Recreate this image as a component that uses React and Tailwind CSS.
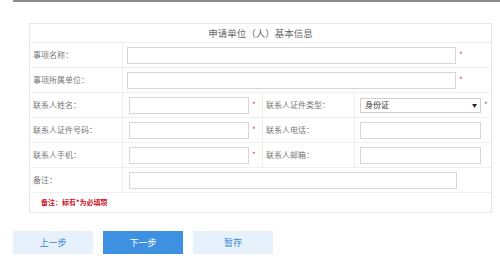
import React from "react";

const font = { fontFamily: '"Noto Sans CJK SC", "Noto Sans", sans-serif' };

function Star() {
  return <span className="ml-[3px] text-[8px] leading-none text-[#e0424b]">*</span>;
}

function Label({ children, className = "" }) {
  return (
    <div className={"flex items-center border-b border-[#efefef] pl-[3px] text-[8px] text-[#777] " + className}>
      {children}
    </div>
  );
}

function Field({ children, className = "" }) {
  return (
    <div className={"flex items-center border-b border-[#efefef] " + className}>{children}</div>
  );
}

function Input({ className = "" }) {
  return <div className={"h-[17px] border border-[#d6d6d6] bg-white " + className} />;
}

export default function App() {
  return (
    <div className="relative h-[269px] w-[500px] overflow-hidden bg-white" style={font}>
      <div className="ml-[13px] h-[2px] bg-[#8c8c8c]" />

      <div className="ml-[29px] mt-[21px] w-[463px] border border-[#e6e6e6]">
        <div className="flex h-[19px] items-center justify-center border-b border-[#ececec] text-[9.5px] text-[#666]" style={{ fontFamily: '"Noto Sans CJK SC", serif' }}>
          申请单位（人）基本信息
        </div>

        <div className="grid grid-cols-[93px_140px_92px_136px]">
          <Label className="h-[25px] border-r">事项名称：</Label>
          <Field className="col-span-3 h-[25px] pl-[4px]">
            <Input className="w-[329px]" />
            <Star />
          </Field>

          <Label className="h-[25px] border-r">事项所属单位：</Label>
          <Field className="col-span-3 h-[25px] pl-[4px]">
            <Input className="w-[329px]" />
            <Star />
          </Field>

          <Label className="h-[25px] border-r">联系人姓名：</Label>
          <Field className="h-[25px] border-r border-r-[#efefef] pl-[6px]">
            <Input className="w-[120px]" />
            <Star />
          </Field>
          <Label className="h-[25px] border-r">联系人证件类型：</Label>
          <Field className="h-[25px] pl-[5px]">
            <div className="flex h-[15px] w-[121px] items-center justify-between border border-[#cfcfcf] bg-white pl-[4px] pr-[3px] text-[8px] text-[#333]">
              <span>身份证</span>
              <span className="text-[5px] text-[#222]">▼</span>
            </div>
            <Star />
          </Field>

          <Label className="h-[25px] border-r">联系人证件号码：</Label>
          <Field className="h-[25px] border-r border-r-[#efefef] pl-[6px]">
            <Input className="w-[120px]" />
            <Star />
          </Field>
          <Label className="h-[25px] border-r">联系人电话：</Label>
          <Field className="h-[25px] pl-[5px]">
            <Input className="w-[121px]" />
          </Field>

          <Label className="h-[25px] border-r">联系人手机：</Label>
          <Field className="h-[25px] border-r border-r-[#efefef] pl-[6px]">
            <Input className="w-[120px]" />
            <Star />
          </Field>
          <Label className="h-[25px] border-r">联系人邮箱：</Label>
          <Field className="h-[25px] pl-[5px]">
            <Input className="w-[121px]" />
          </Field>

          <Label className="h-[25px] border-r">备注：</Label>
          <Field className="col-span-3 h-[25px] pl-[6px]">
            <Input className="w-[328px]" />
          </Field>
        </div>

        <div className="flex h-[19px] items-center pl-[11px] text-[7px] font-bold text-[#d0132a]">
          备注：标有*为必填项
        </div>
      </div>

      <div className="ml-[13px] mt-[18px] flex gap-[10px]">
        <button className="h-[23px] w-[80px] bg-[#e7f1fb] text-[9px] text-[#3a86d4]">上一步</button>
        <button className="h-[23px] w-[80px] bg-[#3d91e0] text-[9px] text-white">下一步</button>
        <button className="h-[23px] w-[80px] bg-[#e7f1fb] text-[9px] text-[#3a86d4]">暂存</button>
      </div>
    </div>
  );
}
